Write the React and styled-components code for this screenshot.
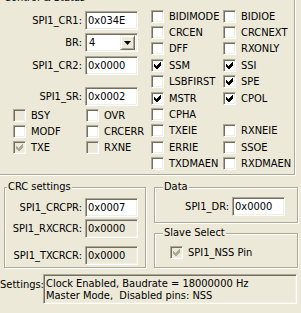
import React from 'react'
import styled, { createGlobalStyle, css } from 'styled-components'

const GlobalStyle = createGlobalStyle`
  html, body {
    margin: 0;
    padding: 0;
    background: #ece9d8;
  }
  body {
    font-family: "DejaVu Sans Condensed", "DejaVu Sans", "Liberation Sans", sans-serif;
    font-stretch: condensed;
    font-size: 11px;
    color: #000;
    overflow: hidden;
  }
`

const sunken = css`
  box-sizing: border-box;
  border: 1px solid;
  border-color: #aca899 #fff #fff #aca899;
  box-shadow: inset 1px 1px 0 #716f64, inset -1px -1px 0 #f1efe2;
`

const Dialog = styled.div`
  width: 301px;
  height: 313px;
  overflow: hidden;
  display: flex;
  flex-direction: column;
`

const Group = styled.div`
  position: relative;
  box-sizing: border-box;
  display: flex;
  flex-direction: ${p => p.$dir || 'row'};
  align-items: flex-start;
  width: ${p => p.$w}px;
  height: ${p => p.$h}px;
  margin: ${p => p.$m || 0};
  flex: none;
  border: 1px solid #aca899;
  box-shadow: inset 1px 1px 0 #fff, 1px 1px 0 #fff;
`

const Caption = styled.span`
  position: absolute;
  top: -7px;
  left: ${p => p.$x ?? 8}px;
  padding: 0 1px;
  line-height: 12px;
  background: #ece9d8;
  white-space: nowrap;
`

const Pane = styled.div`
  display: flex;
  flex-direction: column;
  width: ${p => p.$w}px;
  flex: none;
`

const Field = styled.div`
  display: flex;
  align-items: center;
  margin-top: ${p => p.$top}px;
`

const Label = styled.span`
  box-sizing: border-box;
  width: ${p => p.$w}px;
  padding-right: 3px;
  display: flex;
  justify-content: flex-end;
  white-space: nowrap;
`

const Edit = styled.div`
  ${sunken}
  width: 53px;
  height: 19px;
  padding: 0 2px;
  line-height: 17px;
  white-space: nowrap;
  background: ${p => (p.$readOnly ? '#ece9d8' : '#fff')};
`

const Combo = styled.div`
  ${sunken}
  width: 53px;
  height: 19px;
  padding: 2px 2px 2px 3px;
  display: flex;
  align-items: center;
  justify-content: space-between;
  background: #fff;
`

const DropButton = styled.span`
  box-sizing: border-box;
  width: 15px;
  height: 15px;
  display: flex;
  align-items: center;
  justify-content: center;
  background: #ece9d8;
  border: 1px solid;
  border-color: #f1efe2 #716f64 #716f64 #f1efe2;
  box-shadow: inset 1px 1px 0 #fff, inset -1px -1px 0 #aca899;
`

const CheckGrid = styled.div`
  display: grid;
  grid-template-columns: repeat(2, ${p => p.$col}px);
  grid-auto-rows: 16.4px;
  margin-top: ${p => p.$top || 0}px;
  margin-left: ${p => p.$left || 0}px;
`

const CheckRow = styled.label`
  display: flex;
  align-items: center;
  height: 16.4px;
  white-space: nowrap;
`

const Box = styled.span`
  ${sunken}
  width: 13px;
  height: 13px;
  margin-right: 5px;
  flex: none;
  display: flex;
  align-items: center;
  justify-content: center;
  background: ${p => (p.$disabled ? '#ece9d8' : '#fff')};
`

const BottomRow = styled.div`
  display: flex;
  align-items: flex-start;
  gap: 8px;
  margin: 12px 0 0 4px;
`

const Column = styled.div`
  display: flex;
  flex-direction: column;
  gap: 10px;
`

const SettingsRow = styled.div`
  display: flex;
  align-items: flex-start;
  margin-top: 6px;
`

const SettingsLabel = styled.span`
  box-sizing: border-box;
  width: 43px;
  padding: 5px 4px 0 0;
  line-height: 12px;
  text-align: right;
  white-space: nowrap;
`

const SettingsBox = styled.div`
  ${sunken}
  width: 254px;
  height: 30px;
  padding: 3px 2px;
  line-height: 12px;
  white-space: pre;
  overflow: hidden;
  background: #ece9d8;
`

function Check({ label, checked, disabled }) {
  return (
    <CheckRow>
      <Box $disabled={disabled}>
        {checked && (
          <svg width="7" height="7" viewBox="0 0 7 7" shapeRendering="crispEdges">
            <polygon points="0,2 2,4 6,0 7,0 7,3 3,7 2,7 0,5" fill={disabled ? '#aca899' : '#000'} />
          </svg>
        )}
      </Box>
      {label}
    </CheckRow>
  )
}

const crBits = [
  ['BIDIMODE'], ['BIDIOE'],
  ['CRCEN'], ['CRCNEXT'],
  ['DFF'], ['RXONLY'],
  ['SSM', true], ['SSI', true],
  ['LSBFIRST'], ['SPE', true],
  ['MSTR', true], ['CPOL', true],
  ['CPHA'], null,
  ['TXEIE'], ['RXNEIE'],
  ['ERRIE'], ['SSOE'],
  ['TXDMAEN'], ['RXDMAEN'],
]

const srBits = [
  ['BSY', false, true], ['OVR'],
  ['MODF'], ['CRCERR'],
  ['TXE', true, true], ['RXNE', false, true],
]

function Bits({ items }) {
  return items.map((b, i) =>
    b ? <Check key={i} label={b[0]} checked={b[1]} disabled={b[2]} /> : <span key={i} />
  )
}

export default function App() {
  return (
    <Dialog>
      <GlobalStyle />
      <Group $w={301} $h={177} $m="-2px 0 0 -6px">
        <Caption>Control &amp; Status</Caption>
        <Pane $w={156}>
          <Field $top={12}>
            <Label $w={90}>SPI1_CR1:</Label>
            <Edit>0x034E</Edit>
          </Field>
          <Field $top={3}>
            <Label $w={90}>BR:</Label>
            <Combo>
              4
              <DropButton>
                <svg width="7" height="4" viewBox="0 0 7 4">
                  <polygon points="0,0 7,0 3.5,4" fill="#000" />
                </svg>
              </DropButton>
            </Combo>
          </Field>
          <Field $top={4}>
            <Label $w={90}>SPI1_CR2:</Label>
            <Edit>0x0000</Edit>
          </Field>
          <Field $top={12}>
            <Label $w={90}>SPI1_SR:</Label>
            <Edit>0x0002</Edit>
          </Field>
          <CheckGrid $col={73} $top={1} $left={18}>
            <Bits items={srBits} />
          </CheckGrid>
        </Pane>
        <CheckGrid $col={72} $top={9}>
          <Bits items={crBits} />
        </CheckGrid>
      </Group>

      <BottomRow>
        <Group $w={142} $h={81} $dir="column">
          <Caption $x={2}>CRC settings</Caption>
          <Field $top={10}>
            <Label $w={80}>SPI1_CRCPR:</Label>
            <Edit>0x0007</Edit>
          </Field>
          <Field $top={2}>
            <Label $w={80}>SPI1_RXCRCR:</Label>
            <Edit $readOnly>0x0000</Edit>
          </Field>
          <Field $top={8}>
            <Label $w={80}>SPI1_TXCRCR:</Label>
            <Edit $readOnly>0x0000</Edit>
          </Field>
        </Group>
        <Column>
          <Group $w={144} $h={36} $dir="column">
            <Caption>Data</Caption>
            <Field $top={9}>
              <Label $w={77}>SPI1_DR:</Label>
              <Edit>0x0000</Edit>
            </Field>
          </Group>
          <Group $w={144} $h={35} $dir="column">
            <Caption>Slave Select</Caption>
            <CheckGrid $col={120} $top={10} $left={15}>
              <Check label="SPI1_NSS Pin" checked disabled />
            </CheckGrid>
          </Group>
        </Column>
      </BottomRow>

      <SettingsRow>
        <SettingsLabel>Settings:</SettingsLabel>
        <SettingsBox>
          {'Clock Enabled, Baudrate = 18000000 Hz\nMaster Mode,  Disabled pins: NSS'}
        </SettingsBox>
      </SettingsRow>
    </Dialog>
  )
}
